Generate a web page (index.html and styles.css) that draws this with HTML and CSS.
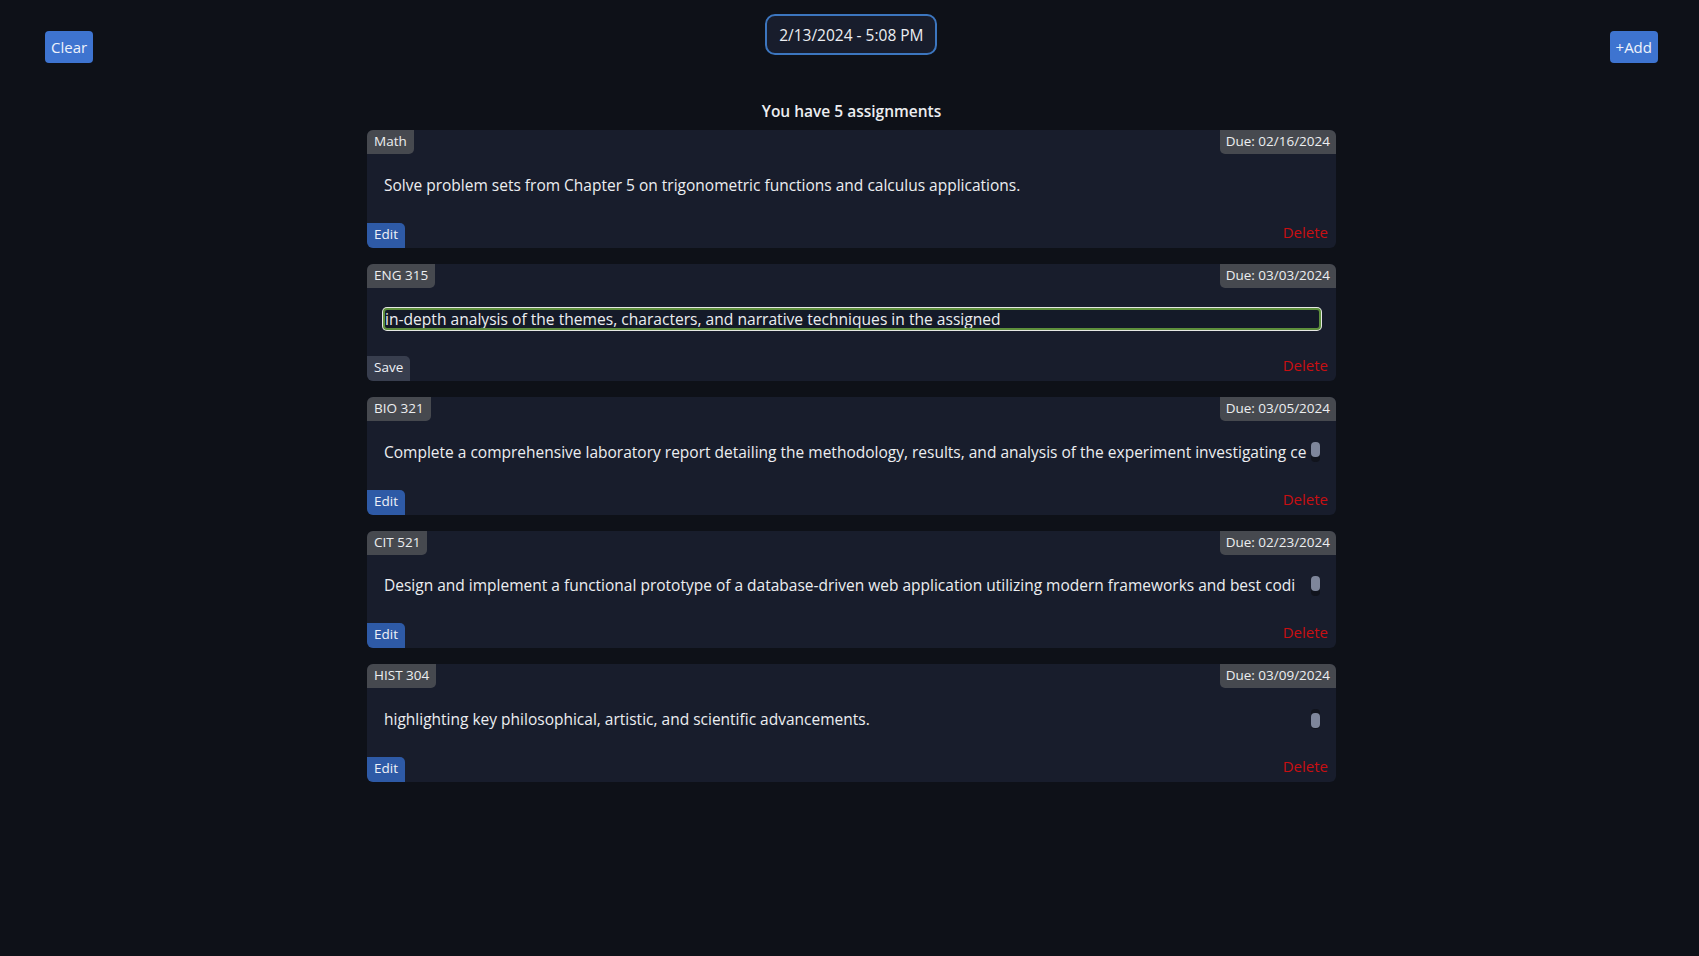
FILE: index.html
```html
<!DOCTYPE html>
<html lang="en">
<head>
<meta charset="utf-8">
<title>Assignments</title>
<link rel="stylesheet" href="styles.css">
</head>
<body>
<div class="app">
  <header class="topbar">
    <button class="btn-primary">Clear</button>
    <div class="clock">2/13/2024 - 5:08 PM</div>
    <button class="btn-primary">+Add</button>
  </header>

  <main class="list">
    <h1 class="count">You have 5 assignments</h1>

    <section class="card">
      <div class="card-head"><span class="tag tag-left">Math</span><span class="tag tag-right">Due: 02/16/2024</span></div>
      <div class="card-body">
        <div class="desc"><div class="desc-text">Solve problem sets from Chapter 5 on trigonometric functions and calculus applications.</div></div>
      </div>
      <div class="card-foot"><button class="btn-edit">Edit</button><button class="btn-delete">Delete</button></div>
    </section>

    <section class="card">
      <div class="card-head"><span class="tag tag-left">ENG 315</span><span class="tag tag-right">Due: 03/03/2024</span></div>
      <div class="card-body">
        <input class="edit-input" type="text" value="in-depth analysis of the themes, characters, and narrative techniques in the assigned " autofocus>
      </div>
      <div class="card-foot"><button class="btn-save">Save</button><button class="btn-delete">Delete</button></div>
    </section>

    <section class="card">
      <div class="card-head"><span class="tag tag-left">BIO 321</span><span class="tag tag-right">Due: 03/05/2024</span></div>
      <div class="card-body">
        <div class="desc">
          <div class="desc-text">Complete a comprehensive laboratory report detailing the methodology, results, and analysis of the experiment investigating ce</div>
          <div class="scrollbar"><div class="thumb"></div></div>
        </div>
      </div>
      <div class="card-foot"><button class="btn-edit">Edit</button><button class="btn-delete">Delete</button></div>
    </section>

    <section class="card">
      <div class="card-head"><span class="tag tag-left">CIT 521</span><span class="tag tag-right">Due: 02/23/2024</span></div>
      <div class="card-body">
        <div class="desc">
          <div class="desc-text">Design and implement a functional prototype of a database-driven web application utilizing modern frameworks and best codi</div>
          <div class="scrollbar"><div class="thumb"></div></div>
        </div>
      </div>
      <div class="card-foot"><button class="btn-edit">Edit</button><button class="btn-delete">Delete</button></div>
    </section>

    <section class="card">
      <div class="card-head"><span class="tag tag-left">HIST 304</span><span class="tag tag-right">Due: 03/09/2024</span></div>
      <div class="card-body">
        <div class="desc">
          <div class="desc-text">highlighting key philosophical, artistic, and scientific advancements.</div>
          <div class="scrollbar scrollbar-end"><div class="thumb"></div></div>
        </div>
      </div>
      <div class="card-foot"><button class="btn-edit">Edit</button><button class="btn-delete">Delete</button></div>
    </section>
  </main>
</div>
</body>
</html>
```

FILE: styles.css
```css
* { box-sizing: border-box; }

html, body {
  margin: 0;
  padding: 0;
  background: #0e1118;
  color: #e8e9ec;
  font-family: "Open Sans", "DejaVu Sans", sans-serif;
}

.app {
  padding-left: 4px;
  min-height: 956px;
}

button {
  font-family: inherit;
  border: none;
  cursor: pointer;
}

.topbar {
  display: flex;
  justify-content: space-between;
  align-items: flex-start;
  padding: 14px 41px 0 41px;
}

.btn-primary {
  margin-top: 17px;
  height: 32px;
  padding: 0 6px;
  background: #3e74d0;
  color: #eef2fb;
  font-size: 15px;
  border-radius: 4px;
}

.clock {
  height: 41px;
  width: 172px;
  display: flex;
  align-items: center;
  justify-content: center;
  border: 2px solid #3c76bf;
  border-radius: 10px;
  background: #181d2c;
  font-size: 15.5px;
  color: #eceef2;
}

.list {
  width: 969px;
  margin: 0 auto;
}

.count {
  margin: 36px 0 7px;
  font-size: 15.5px;
  line-height: 24px;
  font-weight: 600;
  text-align: center;
  color: #eceef1;
}

.card {
  height: 117.5px;
  margin-bottom: 16px;
  background: #181d2c;
  border-radius: 6px;
  overflow: hidden;
  display: flex;
  flex-direction: column;
}

.card-head {
  height: 24px;
  display: flex;
  justify-content: space-between;
}

.tag {
  height: 24px;
  padding: 0 6px 2px;
  line-height: 22px;
  font-size: 13.5px;
  background: #46494f;
  color: #eceef0;
}

.tag-left { border-bottom-right-radius: 5px; padding-left: 7px; padding-right: 7px; }
.tag-right { border-bottom-left-radius: 5px; }

.card-body {
  height: 68.5px;
  padding: 20.5px 16px 0 17px;
}

.desc {
  display: flex;
  height: 21px;
}

.desc-text {
  flex: 1;
  min-width: 0;
  height: 21px;
  line-height: 21px;
  font-size: 15.5px;
  white-space: nowrap;
  overflow: hidden;
  color: #eceef1;
}

.scrollbar {
  flex: none;
  width: 9px;
  height: 20px;
  margin-top: 0.5px;
  background: #11141d;
  border-radius: 4px;
  display: flex;
  flex-direction: column;
}

.scrollbar-end {
  justify-content: flex-end;
  padding-bottom: 1px;
}

.thumb {
  height: 15px;
  background: #7e869b;
  border-radius: 4px;
}

.edit-input {
  display: block;
  width: calc(100% + 2px);
  height: 22px;
  margin: -0.5px -1px 0 -1px;
  padding: 0;
  border: 2px solid #5e8f3c;
  border-radius: 4px;
  box-shadow: 0 0 0 1px #e6e8e4;
  outline: none;
  background: #141a28;
  color: #eceef1;
  caret-color: #ffffff;
  font-family: inherit;
  font-size: 15.6px;
  line-height: 18px;
}

.card-foot {
  height: 25px;
  display: flex;
  justify-content: space-between;
  align-items: flex-start;
}

.btn-edit, .btn-save {
  height: 25px;
  padding: 0 7px 3px;
  line-height: 22px;
  font-size: 13.5px;
  border-top-right-radius: 5px;
  color: #eef1f7;
}

.btn-edit { background: #2e5aa6; }
.btn-save { background: #383e4e; }

.btn-delete {
  margin-top: -1px;
  margin-right: 8px;
  padding: 0;
  background: transparent;
  color: #c80f12;
  font-size: 15px;
  line-height: 20px;
}
```
